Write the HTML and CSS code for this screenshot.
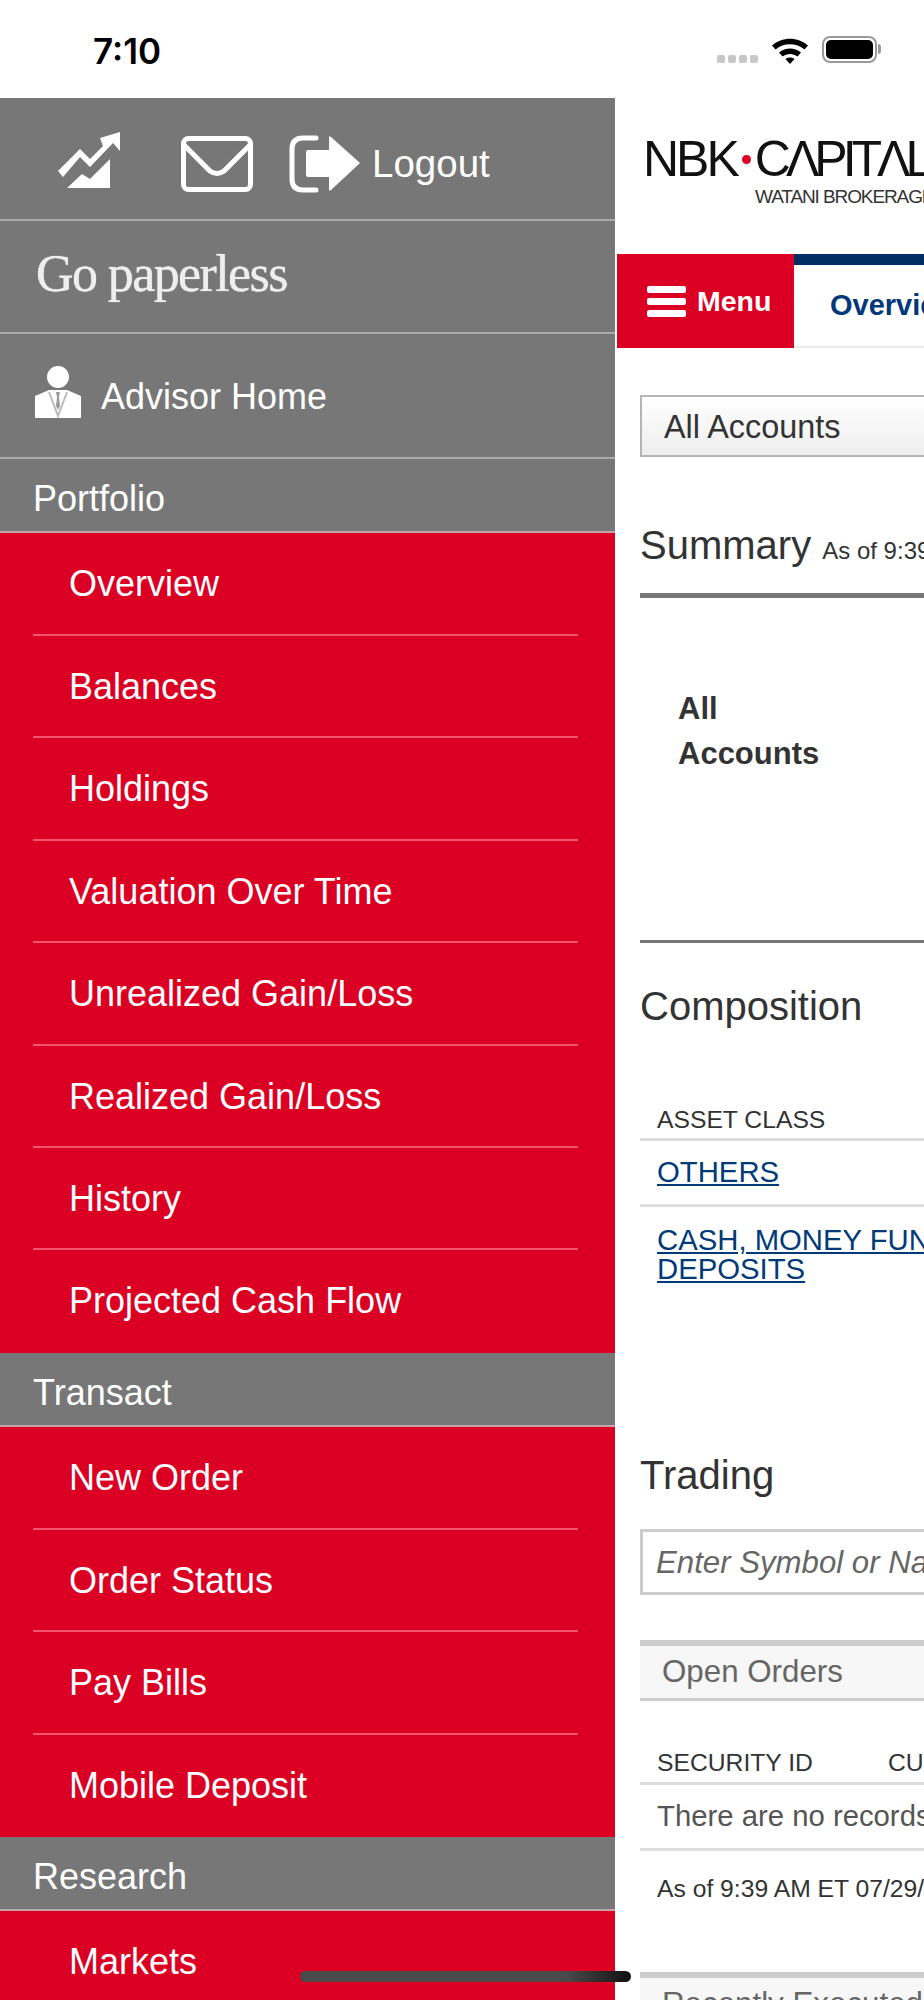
FILE: index.html
```html
<!DOCTYPE html>
<html lang="en">
<head>
    <meta charset="UTF-8">
    <meta name="viewport" content="width=device-width, initial-scale=1.0">
    <title>NBK Capital - Overview</title>
    <link rel="stylesheet" href="styles.css">
</head>
<body>
    <div class="status-bar">
        <span class="clock">7:10</span>
        <div class="status-icons">
            <div class="signal"><i></i><i></i><i></i><i></i></div>
            <svg class="wifi" viewBox="0 0 38 28" width="38" height="28">
                <path d="M1 9.5C11 .5 27 .5 37 9.5l-3.500 4C25.500 6.500 12.500 6.500 4.500 13.500z"/>
                <path d="M8 16.500c6.500-5.500 15.500-5.500 22 0l-3.500 4c-4.500-3.500-10.500-3.500-15 0z"/>
                <path d="M14.500 23c2.500-2 6.500-2 9 0L19 28z"/>
            </svg>
            <div class="battery"><div class="battery-fill"></div></div>
            <div class="battery-cap"></div>
        </div>
    </div>

    <div class="app">
        <nav class="side">
            <div class="side-top">
                <svg class="ico-chart" viewBox="0 0 62 58" width="62" height="58">
                    <path d="M0 39 L22 17 L32 27 L45 14 L42 6 L62 0 L62 19 L55 11 L32 35 L22 25 L5 45z" fill="#fff"/>
                    <path d="M9 56 L24 42 L32 47 L52 27 L52 56z" fill="#fff"/>
                </svg>
                <svg class="ico-mail" viewBox="0 0 72 56" width="72" height="56">
                    <rect x="2.500" y="2.500" width="67" height="51" rx="5" fill="none" stroke="#fff" stroke-width="5"/>
                    <path d="M3 9 L29 35 Q36 40 43 35 L69 9" fill="none" stroke="#fff" stroke-width="5"/>
                </svg>
                <svg class="ico-logout" viewBox="0 0 72 58" width="72" height="58">
                    <path d="M27 3H14Q3 3 3 14V44Q3 55 14 55H27" fill="none" stroke="#fff" stroke-width="5" stroke-linecap="round"/>
                    <path d="M19 15H40V3Q40 0 42 2L71 28L42 55Q40 57 40 54V42H19Q17 42 17 40V17Q17 15 19 15z" fill="#fff"/>
                </svg>
                <span class="logout">Logout</span>
            </div>
            <div class="side-paperless">Go paperless</div>
            <div class="side-advisor">
                <svg class="ico-advisor" viewBox="0 0 48 52" width="48" height="52">
                    <circle cx="24" cy="11" r="11" fill="#fff"/>
                    <path d="M1 30 L15 24 H33 L47 30 V52 H1z" fill="#fff"/>
                    <path d="M15 26 L24 50 L33 26" fill="none" stroke="#bbb" stroke-width="2"/>
                    <path d="M22 26h4l-1 5 1 9-2 4-2-4 1-9z" fill="#999"/>
                </svg>
                <span>Advisor Home</span>
            </div>
            <div class="side-head">Portfolio</div>
            <ul class="side-list">
                <li>Overview</li>
                <li>Balances</li>
                <li>Holdings</li>
                <li>Valuation Over Time</li>
                <li>Unrealized Gain/Loss</li>
                <li>Realized Gain/Loss</li>
                <li>History</li>
                <li>Projected Cash Flow</li>
            </ul>
            <div class="side-head">Transact</div>
            <ul class="side-list">
                <li>New Order</li>
                <li>Order Status</li>
                <li>Pay Bills</li>
                <li>Mobile Deposit</li>
            </ul>
            <div class="side-head">Research</div>
            <ul class="side-list">
                <li>Markets</li>
            </ul>
        </nav>

        <main class="content">
            <div class="logo">
                <div class="logo-name"><span>NBK</span><b></b><span class="logo-cap">C&#923;PIT&#923;L</span></div>
                <div class="logo-sub">WATANI BROKERAGE</div>
            </div>
            <div class="tabs">
                <div class="menu-btn">
                    <div class="burger"><i></i><i></i><i></i></div>
                    <span>Menu</span>
                </div>
                <div class="tab-active">Overview</div>
            </div>

            <div class="body">
                <div class="select">All Accounts</div>

                <h2 class="summary">Summary <small>As of 9:39 AM ET 07/29/2020</small></h2>
                <div class="summary-box">All<br>Accounts</div>

                <h2 class="composition">Composition</h2>
                <div class="th">ASSET CLASS</div>
                <div class="td"><a href="#">OTHERS</a></div>
                <div class="td td-wrap"><a href="#">CASH, MONEY FUNDS AND<br>DEPOSITS</a></div>

                <h2 class="trading">Trading</h2>
                <div class="symbol">Enter Symbol or Name</div>
                <div class="panel-head">Open Orders</div>
                <div class="th th-orders"><span>SECURITY ID</span><span>CURRENCY</span></div>
                <div class="td td-empty">There are no records</div>
                <div class="as-of">As of 9:39 AM ET 07/29/2020</div>
                <div class="panel-head panel-last">Recently Executed</div>
            </div>
        </main>
    </div>

    <div class="home-bar"></div>
</body>
</html>
```

FILE: styles.css
```css
* {
    box-sizing: border-box;
}

body {
    margin: 0;
    width: 924px;
    height: 2000px;
    overflow: hidden;
    position: relative;
    background-color: #fff;
    font-family: "Liberation Sans", Arial, sans-serif;
}

/* status bar */
.status-bar {
    height: 98px;
    display: flex;
    justify-content: space-between;
    align-items: flex-start;
    padding: 31px 43px 0 93px;
}

.clock {
    font-family: Inter, "Liberation Sans", sans-serif;
    font-size: 35px;
    font-weight: 600;
    line-height: 40px;
    color: #000;
}

.status-icons {
    display: flex;
    align-items: flex-start;
    padding-top: 5px;
}

.signal {
    display: flex;
    gap: 3px;
    margin-top: 19px;
    margin-right: 13px;
}

.signal i {
    width: 8px;
    height: 8px;
    border-radius: 2px;
    background-color: #c8c8c8;
}

.wifi {
    fill: #000;
    margin-right: 13px;
}

.battery {
    width: 55px;
    height: 27px;
    border: 2px solid #9a9a9a;
    border-radius: 8px;
    padding: 2px;
}

.battery-fill {
    height: 100%;
    background-color: #000;
    border-radius: 5px;
}

.battery-cap {
    width: 3px;
    height: 10px;
    margin: 8px 0 0 1px;
    background-color: #9a9a9a;
    border-radius: 0 3px 3px 0;
}

/* layout */
.app {
    display: flex;
    height: 1902px;
    overflow: hidden;
}

/* side menu */
.side {
    width: 615px;
    flex-shrink: 0;
    color: #fff;
    background-color: #777;
    font-size: 36px;
}

.side-top {
    height: 123px;
    display: flex;
    align-items: center;
    padding: 10px 0 0 58px;
    border-bottom: 2px solid #aaa;
}

.ico-chart {
    margin-top: -5px;
}

.ico-mail {
    margin-left: 61px;
}

.ico-logout {
    margin-left: 36px;
}

.logout {
    margin-left: 11px;
    font-size: 38.5px;
}

.side-paperless {
    height: 113px;
    padding: 23px 0 0 36px;
    border-bottom: 2px solid #aaa;
    font-family: "Liberation Serif", serif;
    font-size: 52px;
    letter-spacing: -1.6px;
    color: #eee;
    text-shadow: 0 0 1px #fff;
}

.side-advisor {
    height: 125px;
    display: flex;
    align-items: center;
    padding: 2px 0 0 34px;
    border-bottom: 2px solid #aaa;
}

.ico-advisor {
    margin-right: 19px;
    margin-top: -10px;
}

.side-head {
    height: 74.4px;
    padding: 20px 0 0 33px;
    line-height: 40px;
    border-bottom: 2px solid #c4a3a9;
}

.side-list {
    list-style: none;
    margin: 0;
    padding: 0 37px 0 33px;
    background-color: #db0023;
}

.side-list li {
    height: 102.45px;
    padding: 31px 0 0 36px;
    line-height: 40px;
    border-bottom: 2px solid #f2566f;
}

.side-list li:last-child {
    border-bottom: none;
}

/* main column */
.content {
    flex: 1;
    min-width: 0;
    overflow: hidden;
}

.logo {
    height: 156px;
    padding: 36px 0 0 28px;
    white-space: nowrap;
}

.logo-name {
    font-size: 50px;
    line-height: 50px;
    letter-spacing: -3px;
    color: #111;
    display: flex;
    align-items: center;
}

.logo-name b {
    flex-shrink: 0;
    width: 9px;
    height: 9px;
    margin: 0 4px 0 5px;
    border-radius: 50%;
    background-color: #db0023;
}

.logo-cap {
    letter-spacing: -5px;
}

.logo-sub {
    font-size: 19px;
    line-height: 18px;
    letter-spacing: -1.1px;
    color: #333;
    margin: 4px 0 0 112px;
}

.tabs {
    display: flex;
    height: 94px;
    margin-left: 2px;
    white-space: nowrap;
}

.menu-btn {
    width: 177px;
    flex-shrink: 0;
    display: flex;
    align-items: center;
    padding-left: 30px;
    background-color: #db0023;
    color: #fff;
    font-size: 28.5px;
    font-weight: bold;
}

.burger {
    margin-right: 11px;
}

.burger i {
    display: block;
    width: 39px;
    height: 7px;
    margin: 5px 0;
    border-radius: 2px;
    background-color: #fff;
}

.tab-active {
    flex: 1;
    padding-left: 36px;
    line-height: 80px;
    border-top: 11px solid #002d62;
    border-bottom: 2px solid #f0e8ec;
    color: #00387a;
    font-size: 29px;
    font-weight: bold;
}

.body {
    padding: 47px 0 0 25px;
    width: 700px;
}

.select {
    height: 62px;
    padding-left: 22px;
    line-height: 60px;
    border: 2px solid #b5b5b5;
    font-size: 32.4px;
    color: #333;
    background: linear-gradient(#fff, #eee);
}

h2 {
    margin: 0;
    font-weight: normal;
    color: #333;
}

.summary {
    margin-top: 64px;
    padding-bottom: 18px;
    border-bottom: 5px solid #777;
    font-size: 40px;
    line-height: 48px;
}

.summary small {
    font-size: 24px;
}

.summary-box {
    height: 345px;
    padding: 88px 0 0 38px;
    border-bottom: 3px solid #777;
    font-size: 31px;
    line-height: 45px;
    font-weight: bold;
    color: #333;
}

.composition {
    margin-top: 39px;
    font-size: 40px;
    line-height: 48px;
}

.th {
    margin-top: 76px;
    padding: 0 0 4px 17px;
    border-bottom: 3px solid #ddd;
    font-size: 24.7px;
    line-height: 28px;
    color: #333;
}

.td {
    padding: 13px 0 14px 17px;
    font-size: 29.3px;
    line-height: 36px;
    border-bottom: 3px solid #ddd;
}

.td a {
    color: #003a78;
}

.td-wrap {
    border-bottom: none;
    line-height: 29px;
    padding-top: 18px;
}

.trading {
    margin-top: 154px;
    font-size: 40px;
    line-height: 48px;
}

.symbol {
    height: 66px;
    margin-top: 30px;
    padding-left: 13px;
    line-height: 62px;
    border: 3px solid #ccc;
    font-size: 31.2px;
    font-style: italic;
    color: #666;
}

.panel-head {
    height: 61px;
    margin-top: 45px;
    padding-left: 22px;
    line-height: 52px;
    border-top: 6px solid #ccc;
    border-bottom: 3px solid #ccc;
    font-size: 31.3px;
    color: #666;
    background-color: #f7f7f7;
}

.th-orders {
    margin-top: 48px;
    display: flex;
    gap: 75px;
    padding-bottom: 5px;
}

.td-empty {
    color: #555;
    white-space: nowrap;
    padding: 13px 0 14px 17px;
}

.as-of {
    padding: 22px 0 0 17px;
    font-size: 24.7px;
    line-height: 32px;
    color: #333;
    white-space: nowrap;
}

.panel-last {
    margin-top: 67px;
}

/* home indicator */
.home-bar {
    position: absolute;
    left: 300px;
    top: 1971px;
    width: 331px;
    height: 11px;
    border-radius: 6px;
    background: linear-gradient(90deg, #4a4a4a 80%, #111);
}
```
